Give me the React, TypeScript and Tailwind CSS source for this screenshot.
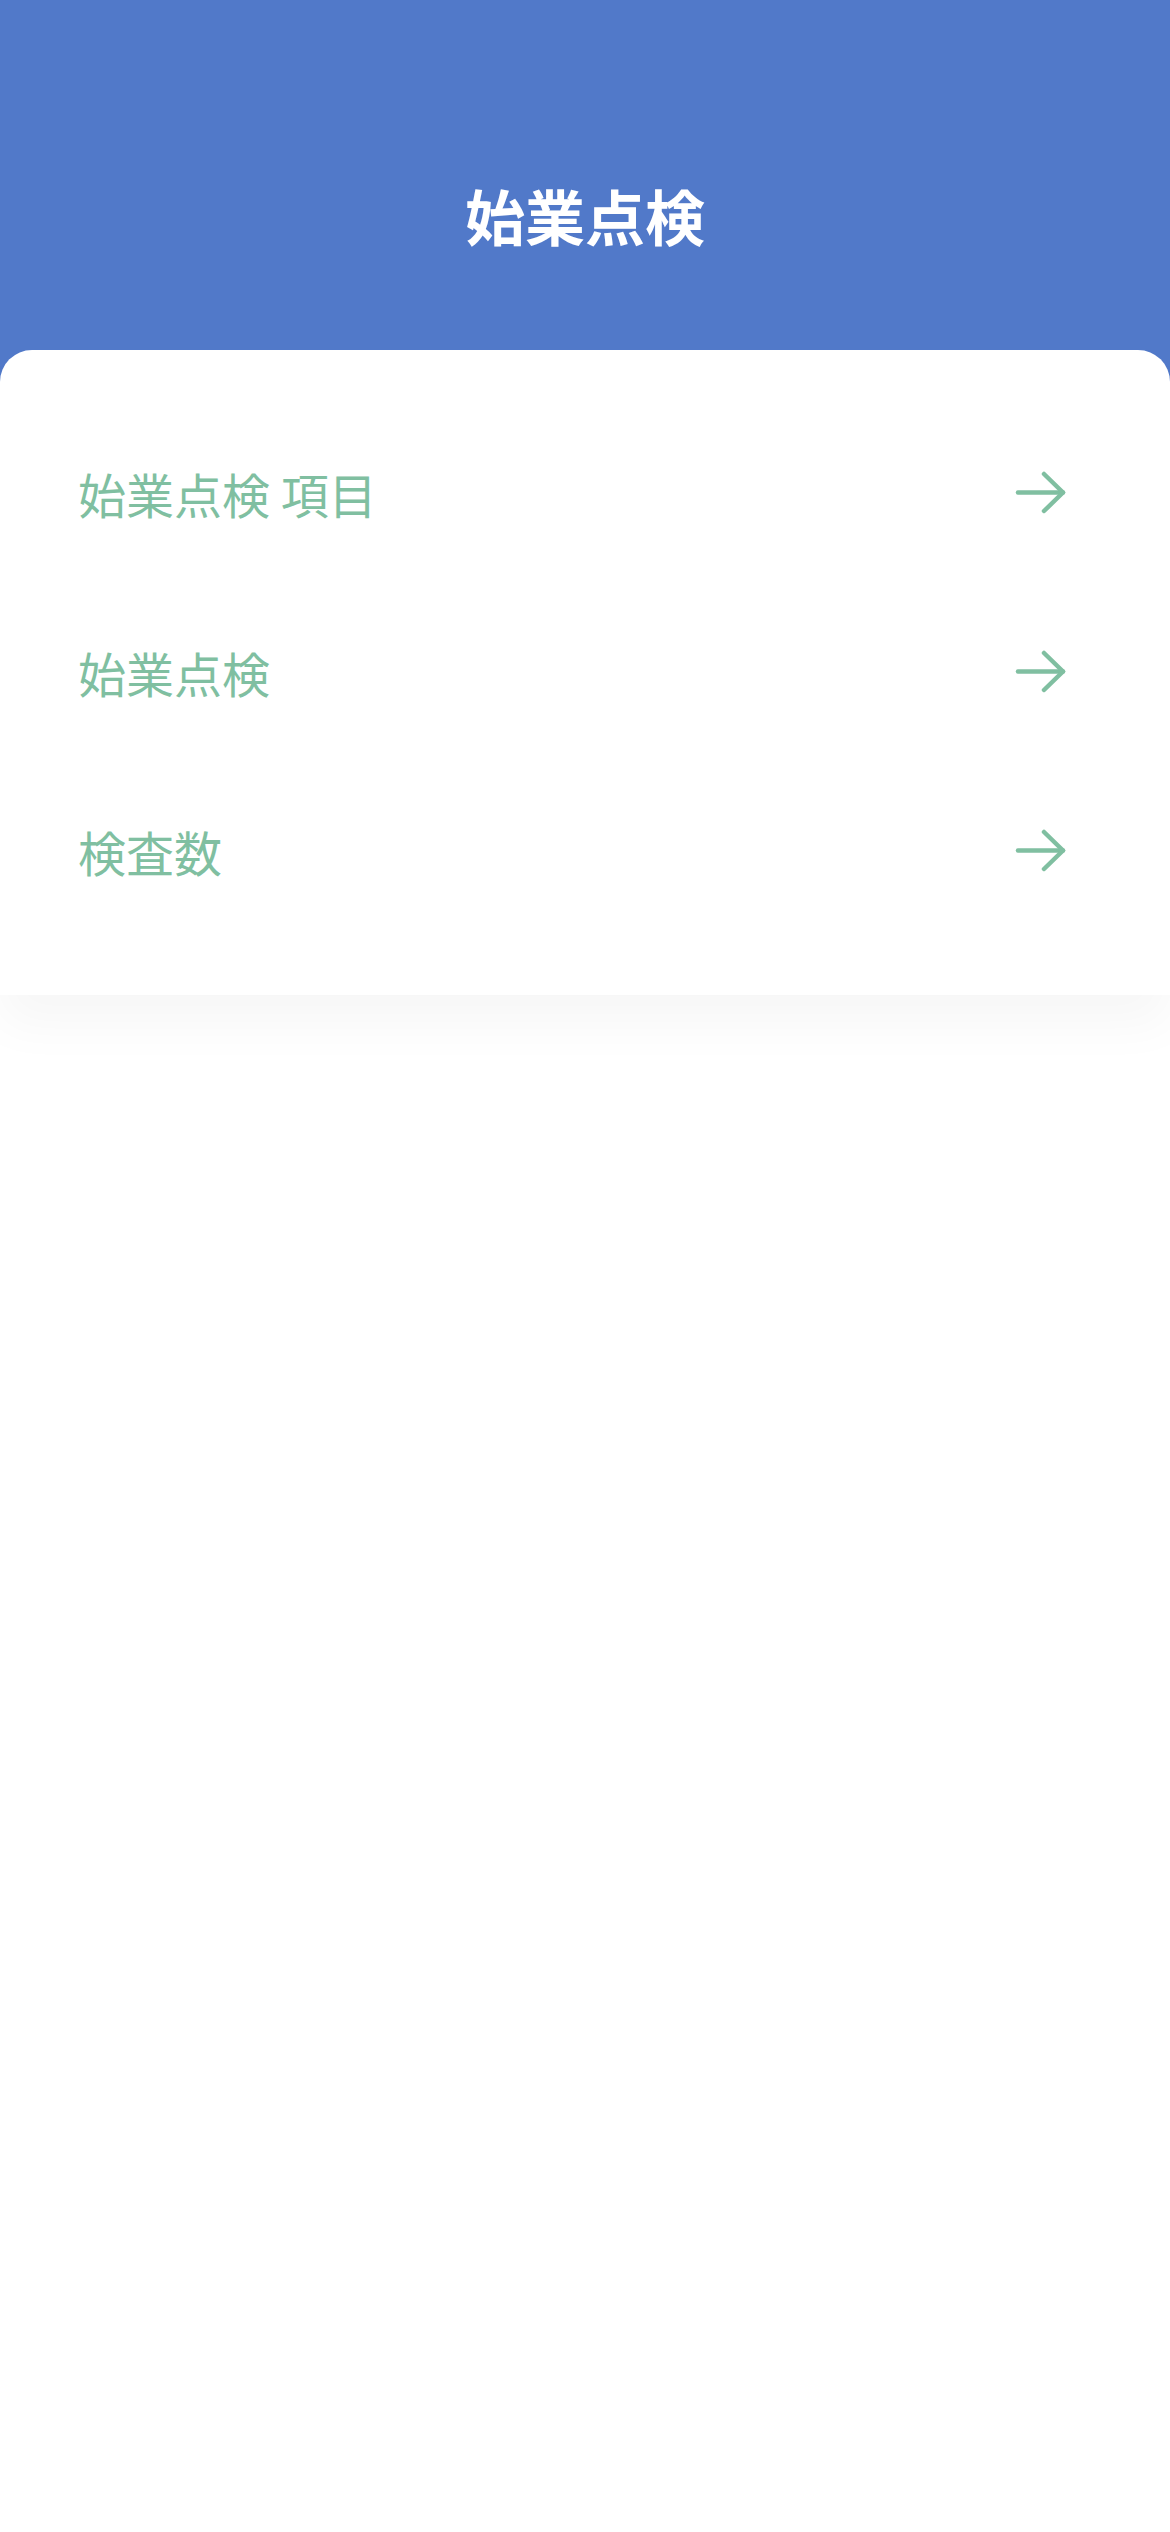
const ITEMS = ["始業点検 項目", "始業点検", "検査数"];

function ArrowIcon() {
  return (
    <svg width="53" height="43" viewBox="0 0 53 43" fill="none" stroke="#80bfa1" strokeWidth="4.5" strokeLinecap="round" strokeLinejoin="round">
      <path d="M4 21.5H49" />
      <path d="M30 3L49 21.5L30 40" />
    </svg>
  );
}

export default function App() {
  return (
    <div
      className="min-h-[2532px] w-[1170px] bg-white"
      style={{ fontFamily: '"Noto Sans CJK JP", "Noto Sans", sans-serif' }}
    >
      <header className="h-[382px] bg-[#5179c9] pt-[185px] flex justify-center">
        <h1 className="text-[60px] leading-none font-bold text-white">始業点検</h1>
      </header>
      <main className="-mt-[32px] rounded-t-[32px] bg-white pt-[53px] pb-[55px] shadow-[0_30px_50px_rgba(0,0,0,0.035)]">
        {ITEMS.map((label) => (
          <div key={label} className="flex h-[179px] items-center justify-between pl-[78px] pr-[103px]">
            <span className="text-[48px] leading-none text-[#80bfa1]">{label}</span>
            <ArrowIcon />
          </div>
        ))}
      </main>
    </div>
  );
}
